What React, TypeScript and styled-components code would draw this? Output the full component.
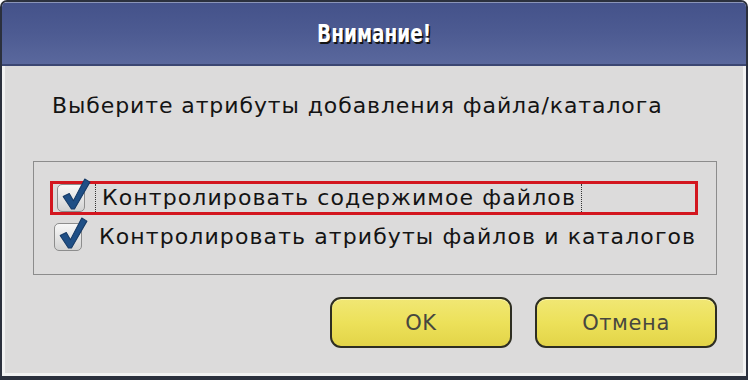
import React from 'react';
import styled, { createGlobalStyle } from 'styled-components';

const GlobalStyle = createGlobalStyle`
  html, body {
    margin: 0;
    padding: 0;
    background: #ffffff;
  }
  * {
    box-sizing: border-box;
  }
`;

const Dialog = styled.div`
  width: 748px;
  height: 380px;
  display: flex;
  flex-direction: column;
  border: 2px solid #2b303d;
  border-bottom-width: 4px;
  border-radius: 7px 7px 0 0;
  overflow: hidden;
  background: #dcdbdb;
  font-family: 'DejaVu Sans', 'Liberation Sans', sans-serif;
`;

const TitleBar = styled.div`
  height: 64px;
  flex: none;
  display: flex;
  align-items: center;
  justify-content: center;
  background: linear-gradient(to bottom, #44528a 0%, #4d5b92 50%, #5a689d 100%);
  border-top: 1px solid #8a94b8;
  border-bottom: 2px solid #3b4672;
`;

const Title = styled.span`
  display: inline-block;
  font-family: 'DejaVu Sans', sans-serif;
  font-weight: bold;
  font-size: 25px;
  color: #ffffff;
  text-shadow: 2px 2px 0 #141414;
  transform: scaleX(0.74);
`;

const Body = styled.div`
  flex: 1;
  display: flex;
  flex-direction: column;
  padding: 28px 26px 20px 28px;
  border-left: 3px solid #f1f1f1;
  border-right: 3px solid #f1f1f1;
  border-bottom: 3px solid #f1f1f1;
`;

const Prompt = styled.div`
  font-size: 22px;
  line-height: 24px;
  letter-spacing: 0.9px;
  color: #141414;
  padding-left: 19px;
`;

const GroupBox = styled.div`
  margin-top: 43px;
  height: 114px;
  border: 1px solid #8c8c8c;
  display: flex;
  flex-direction: column;
  padding-top: 19px;
  gap: 6px;
`;

const Row = styled.div<{ $marked?: boolean }>`
  display: flex;
  align-items: center;
  height: ${(p) => (p.$marked ? '34px' : '31px')};
  width: ${(p) => (p.$marked ? '648px' : 'auto')};
  margin-left: ${(p) => (p.$marked ? '16px' : '20px')};
  padding-left: ${(p) => (p.$marked ? '4px' : '0')};
  border: ${(p) => (p.$marked ? '3px solid #d3161f' : 'none')};
`;

const Box = styled.span`
  position: relative;
  width: 28px;
  height: 28px;
  flex: none;
  border: 1px solid #8d8d8d;
  border-radius: 5px;
  background: linear-gradient(to bottom, #f7f7f7 0%, #e2e2e2 60%, #d2d2d2 100%);
  svg {
    position: absolute;
    left: 2px;
    top: -7px;
  }
`;

const Label = styled.span<{ $focused?: boolean }>`
  margin-left: 10px;
  padding-left: 6px;
  padding-right: 5px;
  font-size: 22px;
  letter-spacing: 1.1px;
  line-height: 28px;
  height: 100%;
  display: flex;
  align-items: center;
  color: #141414;
  border-left: ${(p) => (p.$focused ? '1px dotted #333' : '1px solid transparent')};
  border-right: ${(p) => (p.$focused ? '1px dotted #333' : '1px solid transparent')};
`;

const ButtonRow = styled.div`
  margin-top: 22px;
  display: flex;
  justify-content: flex-end;
  gap: 23px;
`;

const Button = styled.button`
  width: 182px;
  height: 51px;
  border: 2px solid #2e2e22;
  border-radius: 11px;
  background: linear-gradient(to bottom, #f1e774 0%, #ece15a 50%, #e3d448 100%);
  box-shadow: inset 0 1px 0 #fbf5b0;
  font-family: 'DejaVu Sans', 'Liberation Sans', sans-serif;
  font-size: 21px;
  letter-spacing: 0.6px;
  color: #47473f;
  cursor: pointer;
`;

const Check = () => (
  <svg width="31" height="33" viewBox="0 0 30 32">
    <path
      d="M3 18 L9 15 L13 22 L24 1 L29 4 L14 30 L11 30 Z"
      fill="#1f4f86"
      stroke="#163a66"
      strokeWidth="1"
      strokeLinejoin="round"
    />
  </svg>
);

const CheckItem: React.FC<{ label: string; marked?: boolean }> = ({ label, marked }) => (
  <Row $marked={marked}>
    <Box>
      <Check />
    </Box>
    <Label $focused={marked}>{label}</Label>
  </Row>
);

export default function App() {
  return (
    <>
      <GlobalStyle />
      <Dialog>
        <TitleBar>
          <Title>Внимание!</Title>
        </TitleBar>
        <Body>
          <Prompt>Выберите атрибуты добавления файла/каталога</Prompt>
          <GroupBox>
            <CheckItem label="Контролировать содержимое файлов" marked />
            <CheckItem label="Контролировать атрибуты файлов и каталогов" />
          </GroupBox>
          <ButtonRow>
            <Button>OK</Button>
            <Button>Отмена</Button>
          </ButtonRow>
        </Body>
      </Dialog>
    </>
  );
}
